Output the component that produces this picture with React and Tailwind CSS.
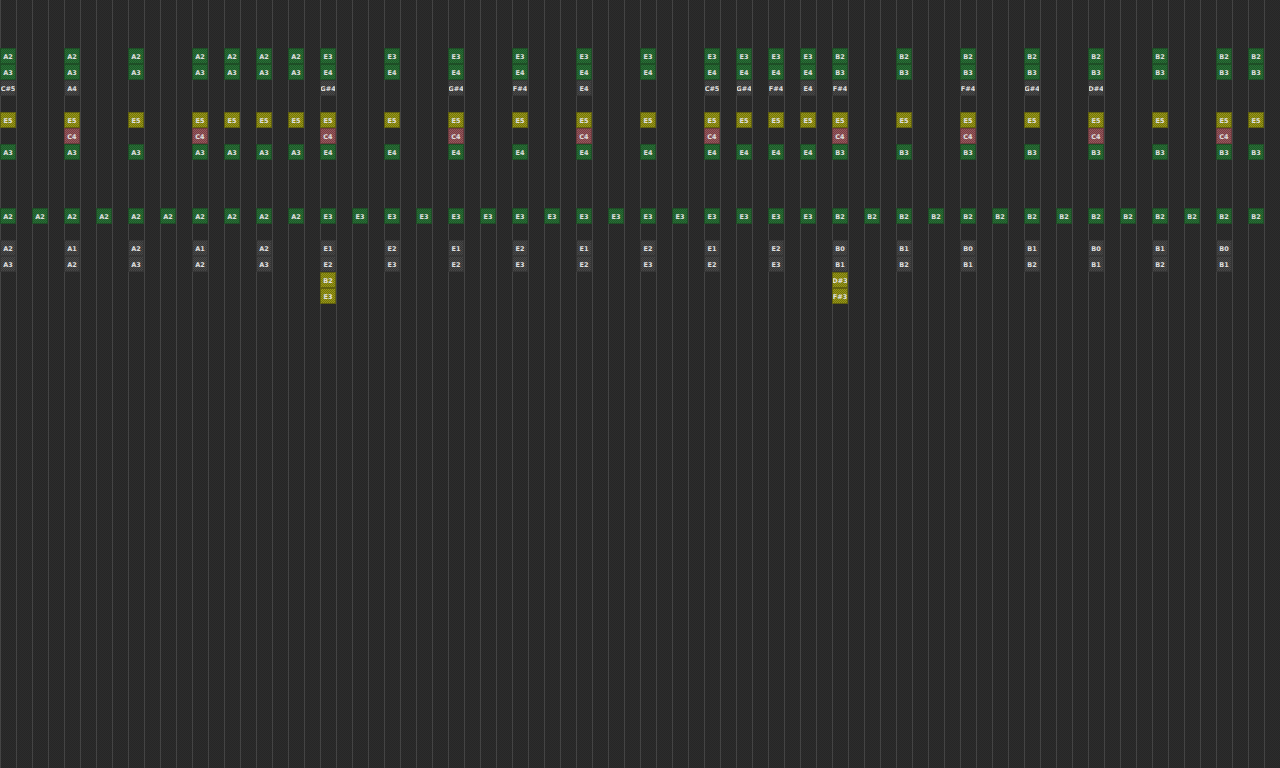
import React from 'react';

const toneClass = {
  green: 'border-[#1e4d26] bg-[#246330] bg-[repeating-conic-gradient(#2a7036_0_25%,#1d5629_0_50%)]',
  gray: 'border-[#353535] bg-[#3c3c3c] bg-[repeating-conic-gradient(#4a4a4a_0_25%,#333333_0_50%)]',
  yellow: 'border-[#60600e] bg-[#878712] bg-[repeating-conic-gradient(#9a9a16_0_25%,#70700e_0_50%)]',
  red: 'border-[#6b3a3e] bg-[#84494e] bg-[repeating-conic-gradient(#99585d_0_25%,#753f44_0_50%)]',
};

const roots = (a, e, b) => (col) => (col < 20 ? a : col < 52 ? e : b);
const beats = [0, 4, 8, 12, 14, 16, 18, 20, 24, 28, 32, 36, 40, 44, 46, 48, 50, 52, 56, 60, 64, 68, 72, 76, 78];
const red = [4, 12, 20, 28, 36, 44, 52, 60, 68, 76];
const every2 = Array.from({ length: 40 }, (_, i) => i * 2);

const fromList = (cols, name, tone) => Object.fromEntries(cols.map((c) => [c, { name: typeof name === 'function' ? name(c) : name, tone }]));
const fromMap = (map, tone) => Object.fromEntries(Object.entries(map).map(([c, name]) => [c, { name, tone }]));

const rows = {
  3: fromList(beats, roots('A2', 'E3', 'B2'), 'green'),
  4: fromList(beats, roots('A3', 'E4', 'B3'), 'green'),
  5: fromMap({ 0: 'C#5', 4: 'A4', 20: 'G#4', 28: 'G#4', 32: 'F#4', 36: 'E4', 44: 'C#5', 46: 'G#4', 48: 'F#4', 50: 'E4', 52: 'F#4', 60: 'F#4', 64: 'G#4', 68: 'D#4' }, 'gray'),
  7: fromList(beats, 'E5', 'yellow'),
  8: fromList(red, 'C4', 'red'),
  9: fromList(beats, roots('A3', 'E4', 'B3'), 'green'),
  13: fromList(every2, roots('A2', 'E3', 'B2'), 'green'),
  15: fromMap({ 0: 'A2', 4: 'A1', 8: 'A2', 12: 'A1', 16: 'A2', 20: 'E1', 24: 'E2', 28: 'E1', 32: 'E2', 36: 'E1', 40: 'E2', 44: 'E1', 48: 'E2', 52: 'B0', 56: 'B1', 60: 'B0', 64: 'B1', 68: 'B0', 72: 'B1', 76: 'B0' }, 'gray'),
  16: fromMap({ 0: 'A3', 4: 'A2', 8: 'A3', 12: 'A2', 16: 'A3', 20: 'E2', 24: 'E3', 28: 'E2', 32: 'E3', 36: 'E2', 40: 'E3', 44: 'E2', 48: 'E3', 52: 'B1', 56: 'B2', 60: 'B1', 64: 'B2', 68: 'B1', 72: 'B2', 76: 'B1' }, 'gray'),
  17: fromMap({ 20: 'B2', 52: 'D#3' }, 'yellow'),
  18: fromMap({ 20: 'E3', 52: 'F#3' }, 'yellow'),
};

function Note({ name, tone }) {
  return (
    <div className={`flex h-4 w-4 items-center justify-center overflow-hidden border bg-[length:2px_2px] pt-[2px] text-[6.5px] leading-none font-bold text-[#e0e0e0] ${toneClass[tone]}`}>
      <span className="opacity-[0.99]">{name}</span>
    </div>
  );
}

export default function App() {
  return (
    <div className="h-[768px] w-[1280px] overflow-hidden bg-[#282828] bg-[repeating-conic-gradient(#2c2c2c_0_25%,#262626_0_50%)] bg-[length:2px_2px] font-['DejaVu_Sans',sans-serif]">
      {Array.from({ length: 48 }, (_, r) => (
        <div key={r} className="flex h-4">
          {Array.from({ length: 80 }, (_, c) => (
            <div key={c} className="h-4 w-4 shrink-0 border-l border-[#444444]">
              {rows[r]?.[c] && (
                <div className="-ml-px">
                  <Note {...rows[r][c]} />
                </div>
              )}
            </div>
          ))}
        </div>
      ))}
    </div>
  );
}
